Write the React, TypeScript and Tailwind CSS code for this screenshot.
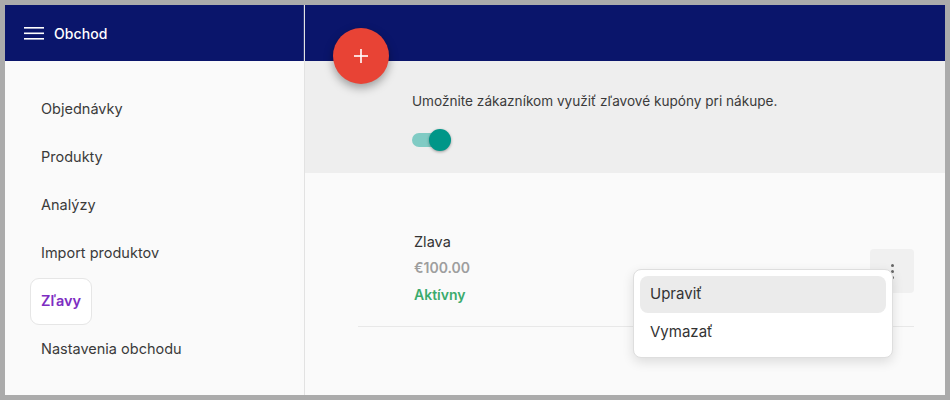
import React from "react";

export default function App() {
  const items = ["Objednávky", "Produkty", "Analýzy", "Import produktov", "Zľavy", "Nastavenia obchodu"];
  return (
    <div className="w-[950px] h-[400px] bg-[#ababab] p-[5px]" style={{ fontFamily: "Inter, 'Noto Sans', sans-serif" }}>
      <div className="flex w-[940px] h-[390px] bg-[#fafafa] overflow-hidden">
        {/* Sidebar */}
        <div className="w-[300px] shrink-0 flex flex-col border-r border-[#e2e2e2]">
          <div className="h-[56px] bg-[#0a156b] flex items-center pl-[19px] gap-[10px] border-r border-[#2a3580]">
            <svg width="20" height="14" viewBox="0 0 20 14" className="mt-[1px]">
              <rect x="0" y="0" width="20" height="1.6" fill="#fff" />
              <rect x="0" y="5.5" width="20" height="1.6" fill="#fff" />
              <rect x="0" y="11" width="20" height="1.6" fill="#fff" />
            </svg>
            <span className="text-white text-[14px] font-medium tracking-[0.1px]">Obchod</span>
          </div>
          <div className="flex flex-col pt-[24px]">
            {items.map((it) => (
              <div key={it} className="h-[48px] flex items-center">
                {it === "Zľavy" ? (
                  <div className="ml-[25px] h-[47px] w-[62px] flex items-center px-[10px] bg-white border border-[#e6e6e6] rounded-[9px] text-[#7d2dc2] font-semibold text-[14.5px]">
                    {it}
                  </div>
                ) : (
                  <span className="ml-[36px] text-[#3a3a3a] text-[14.5px]">{it}</span>
                )}
              </div>
            ))}
          </div>
        </div>
        {/* Main */}
        <div className="flex-1 relative flex flex-col">
          <div className="h-[56px] bg-[#0a156b]" />
          <div className="h-[112px] bg-[#eeeeee] pl-[107px] pt-[31px]">
            <div className="text-[13.6px] text-[#3a3a3a] leading-[18px]">
              Umožnite zákazníkom využiť zľavové kupóny pri nákupe.
            </div>
            <div className="relative mt-[19px] w-[40px] h-[22px]">
              <div className="absolute left-0 top-[4px] w-[30px] h-[14px] rounded-full bg-[#80cbc4]" />
              <div className="absolute left-[17px] top-0 w-[22px] h-[22px] rounded-full bg-[#009688] shadow-[0_1px_3px_rgba(0,0,0,0.35)]" />
            </div>
          </div>
          <div className="pl-[53px] pr-[31px] pt-[56px]">
            <div className="flex items-start justify-between border-b border-[#e8e8e8] pb-[17px]">
              <div className="pl-[56px] flex flex-col">
                <span className="text-[14.5px] text-[#333] leading-[26px]">Zlava</span>
                <span className="text-[14px] text-[#9e9e9e] font-semibold leading-[26px]">€100.00</span>
                <span className="text-[14px] text-[#3aab6d] font-semibold leading-[28px]">Aktívny</span>
              </div>
              <div className="mt-[20px] w-[44px] h-[44px] rounded-[4px] bg-[#f0f0f0] flex flex-col items-center justify-center gap-[3px]">
                <span className="w-[3px] h-[3px] rounded-full bg-[#666]" />
                <span className="w-[3px] h-[3px] rounded-full bg-[#666]" />
                <span className="w-[3px] h-[3px] rounded-full bg-[#666]" />
              </div>
            </div>
          </div>
          {/* FAB */}
          <div className="absolute left-[28px] top-[23px] w-[56px] h-[56px] rounded-full bg-[#e84335] flex items-center justify-center shadow-[0_4px_10px_rgba(0,0,0,0.35)]">
            <svg width="14" height="14" viewBox="0 0 14 14">
              <rect x="6.2" y="0" width="1.6" height="14" fill="#fff" />
              <rect x="0" y="6.2" width="14" height="1.6" fill="#fff" />
            </svg>
          </div>
          {/* Menu */}
          <div className="absolute left-[328px] top-[264px] w-[260px] h-[89px] bg-white rounded-[8px] border border-[#dedede] shadow-[0_4px_12px_rgba(0,0,0,0.12)] p-[6px] flex flex-col">
            <div className="h-[37px] rounded-[8px] bg-[#ebebeb] flex items-center px-[10px] text-[15px] text-[#333]">Upraviť</div>
            <div className="h-[38px] flex items-center px-[10px] text-[15px] text-[#333]">Vymazať</div>
          </div>
        </div>
      </div>
    </div>
  );
}
